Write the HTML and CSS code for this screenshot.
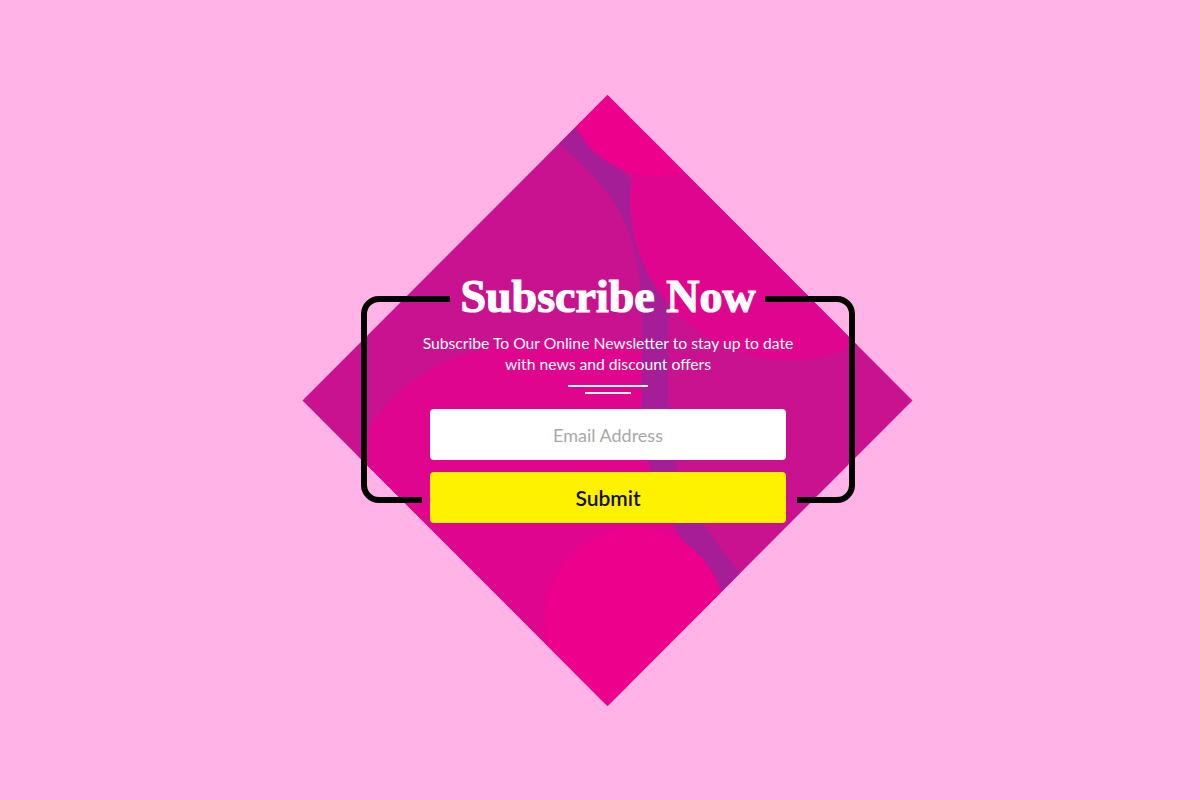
FILE: index.html
```html
<!DOCTYPE html>
<html lang="en">
<head>
<meta charset="utf-8">
<title>Subscribe Now</title>
<link rel="stylesheet" href="styles.css">
</head>
<body>
<main class="stage">
  <svg class="art" viewBox="0 0 1200 800" aria-hidden="true">
    <defs>
      <clipPath id="diamond">
        <polygon points="607.5,95 912.5,400.5 607.5,706 302.5,400.5"/>
      </clipPath>
    </defs>
    <g clip-path="url(#diamond)">
      <rect x="0" y="0" width="1200" height="800" fill="#C8128F"/>
      <path fill="#E0058F" d="M 355 480 C 360 410 420 360 500 345 C 560 336 620 340 656 350 L 656 420 C 660 480 680 520 750 600 L 608 760 L 280 420 Z"/>
      <path fill="none" stroke="#A51E97" stroke-width="26" d="M 560 128 C 600 160 640 200 650 260 C 660 320 652 380 656 420 C 660 480 676 520 746 600"/>
      <circle cx="790" cy="200" r="160" fill="#E0058F"/>
      <circle cx="655" cy="88" r="88" fill="#EC008C"/>
      <circle cx="635" cy="618" r="90" fill="#EC008C"/>
    </g>
  </svg>
  <section class="card">
    <svg class="frame" viewBox="0 0 494 207" aria-hidden="true">
      <path d="M 89 3 H 18 A 15 15 0 0 0 3 18 V 189 A 15 15 0 0 0 18 204 H 61"/>
      <path d="M 404 3 H 476 A 15 15 0 0 1 491 18 V 189 A 15 15 0 0 1 476 204 H 436"/>
    </svg>
    <h1 class="title">Subscribe Now</h1>
    <p class="lead">Subscribe To Our Online Newsletter to stay up to date<br>with news and discount offers</p>
    <div class="divider">
      <span class="rule rule-long"></span>
      <span class="rule rule-short"></span>
    </div>
    <form class="form">
      <input class="email" type="email" placeholder="Email Address">
      <button class="submit" type="button">Submit</button>
    </form>
  </section>
</main>
</body>
</html>
```

FILE: styles.css
```css
html, body {
  margin: 0;
  padding: 0;
}

body {
  background: #FFB3E6;
}

.stage {
  position: relative;
  width: 1200px;
  height: 800px;
  box-sizing: border-box;
  padding-top: 274px;
  display: flex;
  flex-direction: column;
  align-items: center;
  overflow: hidden;
}

.art {
  position: absolute;
  left: 0;
  top: 0;
  width: 1200px;
  height: 800px;
}

.card {
  position: relative;
  width: 494px;
  margin-left: 16px;
  display: flex;
  flex-direction: column;
  align-items: center;
}

.frame {
  position: absolute;
  left: 0;
  top: 22px;
  width: 494px;
  height: 207px;
  pointer-events: none;
}

.frame path {
  fill: none;
  stroke: #000;
  stroke-width: 6;
}

.title {
  position: relative;
  margin: 0;
  font-family: "Liberation Serif", "DejaVu Serif", serif;
  font-weight: 700;
  font-size: 46px;
  line-height: 46px;
  color: #fff;
  -webkit-text-stroke: 1.2px #fff;
  white-space: nowrap;
}

.lead {
  position: relative;
  margin: 13px 0 0;
  font-family: Lato, "Noto Sans", sans-serif;
  font-weight: 400;
  font-size: 15.7px;
  line-height: 21px;
  color: #fff;
  text-align: center;
  white-space: nowrap;
}

.divider {
  margin-top: 10px;
  display: flex;
  flex-direction: column;
  align-items: center;
  gap: 5px;
}

.rule {
  display: block;
  height: 2px;
  background: #fff;
}

.rule-long {
  width: 80px;
}

.rule-short {
  width: 46px;
}

.form {
  position: relative;
  margin: 15px 0 0;
  width: 356px;
  display: flex;
  flex-direction: column;
  gap: 12px;
}

.email {
  height: 51px;
  box-sizing: border-box;
  padding: 0 12px;
  border: 0;
  border-radius: 4px;
  background: #fff;
  font-family: Lato, "Noto Sans", sans-serif;
  font-size: 18px;
  text-align: center;
  color: #333;
  outline: none;
}

.email::placeholder {
  color: #A8A8A8;
  opacity: 1;
}

.submit {
  height: 51px;
  border: 0;
  border-radius: 4px;
  background: #FFF200;
  font-family: Lato, "Noto Sans", sans-serif;
  font-weight: 600;
  font-size: 21px;
  color: #111;
  cursor: pointer;
  padding: 0;
}
```
